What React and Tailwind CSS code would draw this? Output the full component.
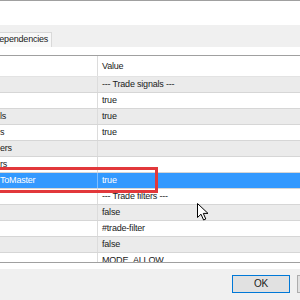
import React from 'react';

const ROWS = [
  { name: '', value: '--- Trade signals ---' },
  { name: '', value: 'true' },
  { name: 'ls', value: 'true' },
  { name: 's', value: 'true' },
  { name: 'ers', value: '' },
  { name: 'rs', value: '' },
  { name: 'ToMaster', value: 'true', selected: true },
  { name: '', value: '--- Trade filters ---' },
  { name: '', value: 'false' },
  { name: '', value: '#trade-filter' },
  { name: '', value: 'false' },
  { name: '', value: 'MODE_ALLOW' },
];

function Row({ row, index }) {
  const gray = index % 2 === 0;
  let bg = gray ? 'bg-[#ebebeb]' : 'bg-white';
  if (row.selected) bg = 'bg-[#3399ff]';
  const text = row.selected ? 'text-white' : 'text-[#1a1a1a]';
  return (
    <div className={`flex h-[16px] shrink-0 border-b border-[#d6d6d6] ${bg} ${text}`}>
      <div className={`w-[98px] shrink-0 leading-[15px] border-r ${row.selected ? 'border-[#7fbfff]' : 'border-[#dcdcdc]'}`}>
        {row.name}
      </div>
      <div className="pl-[4px] leading-[15px] whitespace-nowrap">{row.value}</div>
    </div>
  );
}

function Cursor() {
  return (
    <svg className="absolute left-[197px] top-[203px]" width="12" height="18" viewBox="0 0 12 18">
      <path d="M0.5 0.5 L0.5 14.5 L4 11.2 L6.6 17 L8.8 16 L6.3 10.4 L11 10.4 Z" fill="#fff" stroke="#000" strokeWidth="1" strokeLinejoin="round" />
    </svg>
  );
}

export default function App() {
  return (
    <div className="relative w-[300px] h-[300px] overflow-hidden bg-white text-[9px] tracking-[-0.2px] flex flex-col" style={{ fontFamily: '"Liberation Sans", Arial, sans-serif' }}>
      <div className="h-[1px] shrink-0 bg-[#a0a0a0]" />
      <div className="h-[24px] shrink-0 bg-white" />
      <div className="h-[22px] shrink-0 bg-[#f0f0f0] flex items-end">
        <div className="h-[15px] w-[53px] ml-[-1px] bg-[#f8f8f8] border-t border-r border-[#d9d9d9] overflow-hidden flex items-center">
          <span className="ml-[-6px] text-[#1a1a1a] whitespace-nowrap">Dependencies</span>
        </div>
      </div>
      <div className="h-[8px] shrink-0 bg-white" />
      <div className="h-[208px] shrink-0 border-y border-[#a0a0a0] overflow-hidden flex flex-col">
        <div className="flex h-[21px] shrink-0 border-b border-[#e3e3e3] bg-white text-[#1a1a1a]">
          <div className="w-[98px] shrink-0 border-r border-[#dcdcdc]" />
          <div className="pl-[4px] leading-[20px]">Value</div>
        </div>
        {ROWS.map((r, i) => (
          <Row key={i} row={r} index={i} />
        ))}
      </div>
      <div className="h-[6px] shrink-0 bg-white" />
      <div className="flex-1 bg-[#f0f0f0] flex items-start pt-[6px] pl-[232px] gap-[7px]">
        <button className="w-[58px] h-[18px] shrink-0 bg-[#e1e1e1] border-[1.5px] border-[#0078d7] text-[10px] text-[#1a1a1a] leading-none">OK</button>
        <div className="w-[20px] h-[18px] shrink-0 bg-[#e1e1e1] border border-[#adadad]" />
      </div>
      <div className="absolute left-[-10px] top-[167px] w-[168px] h-[26px] border-[3px] border-[#e2383b]" />
      <Cursor />
    </div>
  );
}
